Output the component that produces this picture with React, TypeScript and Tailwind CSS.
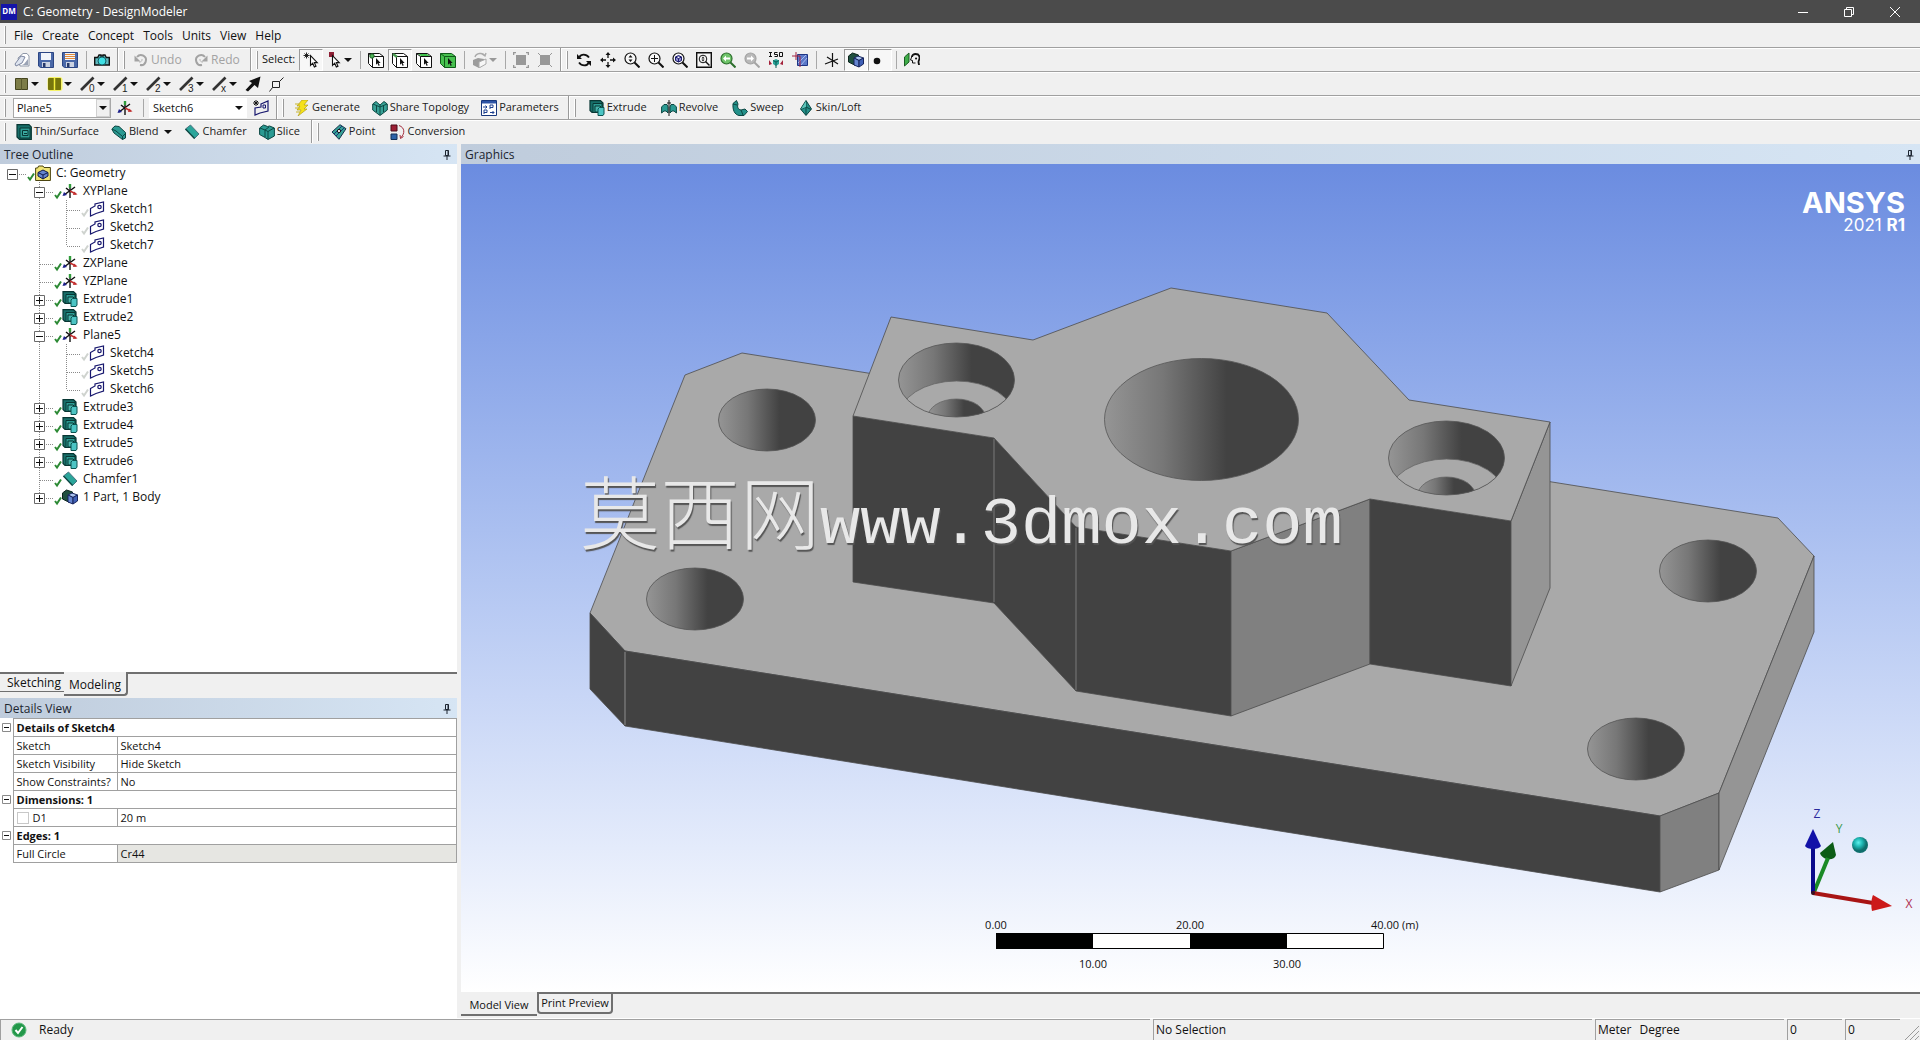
import { useState } from 'react'
import type { ReactNode } from 'react'
import { clsx } from 'clsx'

interface TreeItem {
  id: string
  label: string
  level: number
  icon: ReactNode
  parent?: string
  expandable?: boolean
  hidden?: boolean
}

interface DetailRow {
  label: string
  value?: string
  header?: boolean
  checkbox?: boolean
  readOnly?: boolean
}

function Icon({ children }: { children: ReactNode }) {
  return (
    <svg viewBox="0 0 16 16" className="h-4 w-4 shrink-0" fill="none">
      {children}
    </svg>
  )
}

const CURSOR = 'M0 0v9l2-2 1.5 3.5 1.5-.7L3.500 6.500H6.200z'

const NewIcon = () => (
  <Icon>
    <path d="M4 6 9 1.500h4L15 4v10H6z" fill="#fff" stroke="#8f98a8" />
    <path d="M1 12 7 4l4 1-3 6-6 3z" fill="#dfe5f0" stroke="#7c86a0" />
    <path d="M10 12 14 7v6H8z" fill="#9aa3b5" />
  </Icon>
)

const SaveIcon = ({ lines }: { lines?: boolean }) => (
  <Icon>
    <path d="M.5.5h15v15H2.500L.5 14z" fill="#4a68a8" stroke="#2c4684" />
    <path d="M3 1h10v7H3z" fill="#f2f5fa" />
    {lines && <path d="M3 2.500h10M3 4.500h10M3 6.500h10" stroke="#e08a3a" />}
    <path d="M4 10h8v5H4z" fill="#ccd3e2" />
    <path d="M5 11h2.500v4H5z" fill="#26386a" />
  </Icon>
)

const CameraIcon = () => (
  <Icon>
    <path d="M.7 5.500h3L5 3h2v1h2V3h2l1.300 2.500h3v7.500H.7z" fill="#5fb7bd" stroke="#111" strokeWidth="1.400" />
    <circle cx="8" cy="9" r="4" fill="#3fe0e4" stroke="#145c63" />
  </Icon>
)

const UndoIcon = ({ flip }: { flip?: boolean }) => (
  <Icon>
    <g transform={flip ? 'matrix(-1 0 0 1 16 0)' : undefined}>
      <path d="M4 5a5 5 0 1 1 3 8" stroke="#a3a3a3" strokeWidth="2" />
      <path d="M1.500 3.500v6h6z" fill="#a3a3a3" />
      <path d="M6 10a2.500 2.500 0 0 0 3-3" stroke="#b5b5b5" />
    </g>
  </Icon>
)

const NewSelectIcon = () => (
  <Icon>
    <path d="M3.500.500v6M.500 3.500h6M1.500 1.500l4 4M5.500 1.500l-4 4" stroke="#111" strokeWidth=".9" />
    <path transform="translate(7.500 3.500) scale(1.100)" d={CURSOR} fill="#fff" stroke="#111" />
  </Icon>
)

const SelectModeIcon = () => (
  <Icon>
    <path d="M2 0h5v5H2z" fill="#8e1f35" />
    <path transform="translate(5.500 3.500) scale(1.100)" d={CURSOR} fill="#fff" stroke="#111" />
  </Icon>
)

const FilterIcon = ({ kind }: { kind: 'point' | 'edge' | 'face' | 'body' }) => {
  const body = kind === 'body'
  return (
    <Icon>
      <path
        d="M.5 1.500h11l4 3v11h-11l-4-4z"
        fill={body ? '#46c04e' : '#fff'}
        stroke={body ? '#0f5a18' : '#111'}
      />
      {kind === 'face' && <path d="M2 2h9l3 2H5z" fill="#3fc04a" />}
      <path d="M4.500 4.500h11M4.500 4.500v11M.500 1.500l4 3" stroke={body ? '#0f5a18' : '#111'} />
      {kind === 'edge' && <path d="m1 2 4 3" stroke="#4a9a50" strokeWidth="2.400" />}
      {kind === 'point' && <circle cx="4" cy="4" r="2.200" fill="#4fb558" stroke="#1c5c24" />}
      <path transform="translate(8 6) scale(.75)" d={CURSOR} fill="#111" />
    </Icon>
  )
}

const ExtendIcon = () => (
  <Icon>
    <path d="m1 8 5-2 6 1v6l-5 3-6-3z" fill="#9c9c9c" />
    <path d="m7 10 7-3v5l-7 4z" fill="#f7f7f7" stroke="#aaa" />
    <path d="M3 5c1-4 8-5 10-1M10 2l3 2 1-3" stroke="#aaa" strokeWidth="1.400" />
  </Icon>
)

const GrowIcon = ({ inward }: { inward?: boolean }) => (
  <Icon>
    <path d="M3 3h10v10H3z" fill="#999" />
    {inward ?
      <path d="m1 1 4 4M15 1l-4 4M1 15l4-4M15 15l-4-4" stroke="#999" />
    : <path d="M.5 3V.5H3M13 .5h2.500V3M.5 13v2.500H3M15.500 13v2.500H13" stroke="#999" strokeWidth="1.600" />}
  </Icon>
)

const RotateIcon = () => (
  <Icon>
    <path d="M13 5.500C10 1.500 5 2 3.500 5M3 10.500c3 4 8 3.500 9.500.500" stroke="#111" strokeWidth="1.800" />
    <path d="M1 2v5h5zM15 14V9h-5z" fill="#111" />
  </Icon>
)

const PanIcon = () => (
  <Icon>
    <path d="M8 2v4M8 10v4M2 8h4M10 8h4" stroke="#111" strokeWidth="1.300" />
    <path d="m8 0 2.500 3h-5zM8 16l2.500-3h-5zM0 8l3-2.500v5zM16 8l-3-2.500v5z" fill="#111" />
  </Icon>
)

const Lens = ({ children, color = '#111', fill = '#f7f7f7' }: { children?: ReactNode; color?: string; fill?: string }) => (
  <Icon>
    <circle cx="6.500" cy="6.500" r="5.500" stroke={color} fill={fill} strokeWidth="1.200" />
    <path d="m10.500 10.500 5 5" stroke={color} strokeWidth="2" />
    {children}
  </Icon>
)

const FitIcon = () => (
  <Icon>
    <path d="M.7.7h14.600v14.600H.7z" stroke="#111" strokeWidth="1.400" fill="#f7f7f7" />
    <circle cx="7" cy="7" r="3.800" stroke="#111" />
    <path d="m9.500 9.500 4 4" stroke="#111" strokeWidth="1.500" />
    <path d="M7 4.500 8.500 6.500h-3zM7 9.500 8.500 7.500h-3z" fill="#111" />
  </Icon>
)

const IsoIcon = () => (
  <Icon>
    <path d="M1 .5h3M2.500.5v4M1 4.500h3M9.500.5h-3v2h3v2h-3M11.500.5h3v4h-3z" stroke="#111" />
    <path d="m8 7 3 1.500v3.500l-3 2-3-2V8.500z" fill="#2ba59a" />
    <path d="m5 8.500 3 1.500 3-1.500M8 10v6" stroke="#0c5c55" />
    <path d="M1 8v5l3-1zM15 8v5l-3-1z" fill="#a3213a" />
  </Icon>
)

const LookAtIcon = () => (
  <Icon>
    <path d="M5.500 2.500h10v11h-10z" fill="#5a78c8" stroke="#1d3484" />
    <path d="m6 11 8-8M9 13l6-7" stroke="#a7baf0" />
    <path d="M0 4h8M4 0v8M8 4v11" stroke="#a02040" />
  </Icon>
)

const AxesIcon = () => (
  <Icon>
    <path d="M8.500 1v14M1 12l13-5M3 5l11 7" stroke="#111" strokeWidth="1.200" />
  </Icon>
)

const PlaneIcon = () => (
  <Icon>
    <path d="M8 1v14" stroke="#111" strokeWidth="1.400" />
    <path d="M8 1v4" stroke="#2f9b3a" strokeWidth="2.400" />
    <path d="M2 12 13 4M4 5l5 4" stroke="#111" strokeWidth="1.500" />
    <path d="m8 8 6 3" stroke="#c22f2f" strokeWidth="1.500" />
    <path d="m12 8.500 3.500 3-4.500.500z" fill="#c22f2f" />
    <path d="M.5 13 2 9l3 3z" fill="#1b1f8c" />
  </Icon>
)

const BodyIcon = () => (
  <Icon>
    <path d="m.5 4 4-3 6 2v7l-4 3-6-3z" fill="#1f4f3f" stroke="#0c241c" />
    <path d="m6 6 4-2 5.500 2-4.500 2.500z" fill="#a9c2ee" stroke="#17245c" />
    <path d="m6 6 5 2.500v6.500L6 13z" fill="#6484cf" stroke="#17245c" />
    <path d="M11 8.500 15.500 6v6L11 15z" fill="#3f5fb5" stroke="#17245c" />
  </Icon>
)

const DotIcon = () => (
  <Icon>
    <circle cx="5" cy="9" r="3.300" fill="#111" />
  </Icon>
)

const FaceIcon = () => (
  <Icon>
    <path d="M.5 5 5 1v9L.5 14z" fill="#3fae49" stroke="#1a5c22" />
    <path d="M8 5c0-4 7-4 7.500 0 .3 3-1 3-1 5 0 1 .500 2 .500 3" stroke="#111" strokeWidth="1.800" />
    <path d="M8 4 6.500 8l2 .500v2.500h3" stroke="#111" />
    <path d="M12 6.500h.100" stroke="#111" strokeWidth="2" strokeLinecap="round" />
  </Icon>
)

const ColorBoxIcon = ({ glow }: { glow?: boolean }) => (
  <Icon>
    {glow && <rect x=".5" y="1" width="15" height="14" rx="3" fill="#f6f36a" />}
    <path d="M1.500 2.500h12v11h-12z" fill={glow ? '#77760c' : '#7d7d48'} stroke={glow ? '#77760c' : '#45451f'} />
    <path d="M7.500 2v12" stroke={glow ? '#f3ef3c' : '#59592c'} strokeWidth={glow ? 1.5 : 1} />
  </Icon>
)

const JointIcon = ({ mark }: { mark: string }) => (
  <Icon>
    <path d="M1 14 13.500 1.500" stroke="#333" strokeWidth="2.600" />
    <text x="9" y="15.500" fontSize="10" fill="#222" fontFamily="Liberation Sans">
      {mark}
    </text>
  </Icon>
)

const ArrowIcon = () => (
  <Icon>
    <path d="M15.500.5 13 12l-3.500-3L3 15.500.5 14 7 7 4 5z" fill="#111" />
  </Icon>
)

const PinPointIcon = () => (
  <Icon>
    <path d="M3.500 5.500h7v6h-7zM10.500 5.500l4-4M3.500 11.500l-3 4" stroke="#222" />
  </Icon>
)

const SketchIcon = () => (
  <Icon>
    <path d="M1.500 7.500 6 5V3l8.500-2v9L7 12.500 1.500 15z" fill="#fff" stroke="#17176e" strokeWidth="1.200" />
    <circle cx="10.500" cy="6" r="1.700" stroke="#17176e" strokeWidth="1.200" />
  </Icon>
)

const NewSketchIcon = () => (
  <Icon>
    <path d="M3 0v6M0 3h6M1 1l4 4M5 1 1 5" stroke="#111" />
    <path d="M8 4 15 1v10l-8 2-5 2V8l6-1z" stroke="#17176e" strokeWidth="1.200" />
    <path d="M10 5h2.500v3H10z" stroke="#17176e" />
  </Icon>
)

const GenerateIcon = () => (
  <Icon>
    <path d="M8 0h6l-4 5h4l-4 4h3L4 16l3-6H3l3-4H3z" fill="#f5e11a" stroke="#a8940c" strokeWidth=".6" />
    <path d="M1 4h5M1 8h5M2 12h4" stroke="#c9b62c" />
  </Icon>
)

const ShareIcon = () => (
  <Icon>
    <path d="M.7 4 4 1.500 8 5l4-3.500L15.300 4v6L8 15.500.7 10z" fill="#37a196" stroke="#0e4a45" />
    <path d="M8 5v10M4.500 6v6M11.500 6v6M1 4l7 3 7-3" stroke="#0e4a45" />
  </Icon>
)

const ParametersIcon = () => (
  <Icon>
    <path d="M.5.5h15v15H.5z" fill="#fff" stroke="#17377c" />
    <path d="M1 1h14v2.500H1z" fill="#2e55a6" />
    <path d="M2 7h4M4.500 5.500 6 7 4.500 8.500M9 9V5h3v2.500H9M3 14v-4h3v2.500H3M9 12.500h4M11.500 11l1.500 1.500-1.500 1.500" stroke="#1b3f8f" />
  </Icon>
)

const ExtrudeIcon = () => (
  <Icon>
    <path d="M1 .7h10.500L14 3v8.500l-1 1H3L1 10.500z" fill="#176e69" stroke="#083633" strokeWidth="1.200" />
    <path d="M4 3.500h9v9H4z" fill="#2b9a92" stroke="#083633" />
    <path d="M6 6h5l2 2v4H6z" fill="#45b3aa" stroke="#083633" />
    <path d="m9 9 1.500-1.500H15V14l-1 1.500H9z" fill="#4cc4c4" stroke="#0b5350" />
  </Icon>
)

const ThinIcon = () => (
  <Icon>
    <path d="M1 .7h12L15.300 3v12.300H3.500L1 13z" fill="#176e69" stroke="#083633" strokeWidth="1.200" />
    <path d="M4 4h10v10H4z" fill="#2f9c94" stroke="#083633" />
    <path d="M6.500 6.500h5.500v5H6.500z" fill="#3aa89f" stroke="#083633" />
    <path d="M8 9.500h3" stroke="#083633" />
  </Icon>
)

const RevolveIcon = () => (
  <Icon>
    <path d="M.6 7 3 4.500h3L7 7v6L5 11H3L.6 13zM15.400 7 13 4.500h-3L9 7v6l2-2h2l2.400 2z" fill="#2b9a92" stroke="#0b4642" />
    <path d="M8 0v16M6 3h4" stroke="#111" />
  </Icon>
)

const SweepIcon = () => (
  <Icon>
    <path d="M1 3.500 4.500.5 6 4c-1 3 0 5.500 3 6l4-1 2.500 2.500-3.500 4H7C2.500 14.500.5 10 1 3.500z" fill="#239089" stroke="#0b4642" />
    <path d="m1 4 4 1M9 10l2 5" stroke="#0b4642" />
  </Icon>
)

const LoftIcon = () => (
  <Icon>
    <path d="M8 .5 13.500 9 8 15.500 2.500 9z" fill="#239089" stroke="#0b4642" />
    <path d="M8 1v14M3 9.500 8 7l5 2.500" stroke="#0b4642" />
    <path d="M8 1v6L3 9z" fill="#5cc4ba" />
  </Icon>
)

const BlendIcon = () => (
  <Icon>
    <path d="M.8 5 4 2l4 .5 6.500 6V14l-3 1.500L3 9z" fill="#2b9a92" stroke="#0b4642" />
    <path d="m1 5 4 2 6.500 5.500v3M11.500 12.500l3-3" stroke="#0b4642" />
  </Icon>
)

const ChamferIcon = () => (
  <Icon>
    <path d="m1.500 5 5-4 8.500 9-4.500 4.500z" fill="#2ba59a" stroke="#4a7480" />
    <path d="m1.500 5 9 9.500" stroke="#0e4a45" strokeWidth="1.400" />
  </Icon>
)

const SliceIcon = () => (
  <Icon>
    <path d="m.6 4 4-3 4 1.500 2-.5L15.400 4v8L9 15.500l-3-2-5.400-3z" fill="#2b9a92" stroke="#0b4642" />
    <path d="m1 4 5 2v7M6 6l4-3M9 7.500l6-3.500M9 7.500v7.500M9 7.500 6 6" stroke="#0b4642" />
  </Icon>
)

const PointIcon = () => (
  <Icon>
    <path d="M1 8 9 .7l6 4L8 15.300z" fill="#37a196" stroke="#15324c" />
    <path d="m3 10 8-8M5 12l8-8" stroke="#17377c" />
    <circle cx="8" cy="7" r="1.600" fill="#fff" stroke="#111" />
  </Icon>
)

const ConversionIcon = () => (
  <Icon>
    <path d="M1 1h6v6H1z" fill="#9c1f34" stroke="#4a0c18" />
    <path d="M1 10h6v5.500H1z" fill="#2c62a8" stroke="#122f55" />
    <path d="M9 1.500c6 2 6 8 2 12M13.500 12.500l-3 2-.5-3.500" stroke="#a32c3c" />
  </Icon>
)

const GeometryIcon = () => (
  <Icon>
    <path d="M.6 3h2l1-2H8l1 1.500h6.400v13H.6z" fill="#f0e474" stroke="#4b4510" />
    <path d="M3 7.500 8 5l5 2.500v3.500l-5 3-5-3z" fill="#6484cf" stroke="#111b4c" />
    <path d="m3 7.500 5 2.500 5-2.500M8 10v4" stroke="#111b4c" />
  </Icon>
)

const Caret = ({ muted }: { muted?: boolean }) => (
  <svg viewBox="0 0 8 4" className="h-1 w-2 shrink-0">
    <path d="M0 0h8L4 4z" fill={muted ? '#999' : '#111'} />
  </svg>
)

const PushPin = () => (
  <svg viewBox="0 0 8 10" className="h-[10px] w-2" fill="none" stroke="#1c2530">
    <path d="M2.500.500h3v5h-3zM5 .5v5M.500 6h7M4 6v4" />
  </svg>
)

const Grip = () => <div className="mr-1 ml-1 h-[18px] w-[2px] shrink-0 border-r border-l border-r-[#9a9a9a] border-l-white" />

const Separator = () => (
  <div className="flex w-2 shrink-0 justify-center">
    <div className="h-[18px] w-px bg-[#a8a8a8]" />
  </div>
)

const GroupEnd = () => (
  <div className="flex h-full shrink-0 items-center pl-[3px]">
    <div className="h-full w-[2px] border-r border-l border-r-white border-l-[#9a9a9a]" />
    <Grip />
  </div>
)

function ToolButton({ title, pressed, children }: { title: string; pressed?: boolean; children: ReactNode }) {
  return (
    <button
      title={title}
      aria-label={title}
      aria-pressed={pressed}
      className={clsx(
        'flex h-[22px] w-6 shrink-0 items-center justify-center border',
        pressed ? 'border-t-[#9a9a9a] border-r-white border-b-white border-l-[#9a9a9a] bg-[#f7f7f7]' : 'border-transparent',
      )}
    >
      {children}
    </button>
  )
}

function DropButton({ title, muted, children }: { title: string; muted?: boolean; children: ReactNode }) {
  return (
    <button title={title} aria-label={title} className="flex h-[22px] w-[33px] shrink-0 items-center gap-px pl-1">
      {children}
      <Caret muted={muted} />
    </button>
  )
}

function TextButton({ icon, label, caret }: { icon: ReactNode; label: string; caret?: boolean }) {
  return (
    <button className="flex h-[22px] shrink-0 items-center gap-[2px] px-[6px] whitespace-nowrap text-[#222]">
      {icon}
      {label}
      {caret && (
        <span className="pl-1">
          <Caret />
        </span>
      )}
    </button>
  )
}

function Combo({ label, options, framed }: { label: string; options: string[]; framed?: boolean }) {
  return (
    <div className="relative flex shrink-0 items-center">
      <select
        aria-label={label}
        className={clsx(
          'h-5 w-[98px] appearance-none border bg-white pl-[3px] leading-4 outline-none',
          framed ? 'border-[#a8a8a8]' : 'border-white',
        )}
      >
        {options.map((option) => (
          <option key={option}>{option}</option>
        ))}
      </select>
      <span
        className={clsx(
          'pointer-events-none absolute inset-y-px right-px flex w-[14px] items-center justify-center',
          framed && 'border border-[#d0d0d0] bg-[#f0f0f0]',
        )}
      >
        <Caret />
      </span>
    </div>
  )
}

function ToolRow({ children }: { children: ReactNode }) {
  return (
    <div className="flex h-6 items-center overflow-hidden border-t border-[#a0a0a0] shadow-[inset_0_1px_0_#fff]">
      <Grip />
      {children}
    </div>
  )
}

function PanelHeader({ title }: { title: string }) {
  return (
    <div className="flex h-5 shrink-0 items-center justify-between bg-linear-to-r from-[#bfccdc] to-[#d6e5f4] pt-px pr-[6px] pl-1 text-[#1c2530]">
      <h2>{title}</h2>
      <button aria-label={`Pin ${title}`}>
        <PushPin />
      </button>
    </div>
  )
}

const menus = ['File', 'Create', 'Concept', 'Tools', 'Units', 'View', 'Help']

const extrude = (n: number): TreeItem => ({
  id: `extrude${n}`,
  label: `Extrude${n}`,
  level: 1,
  icon: <ExtrudeIcon />,
  expandable: true,
})

const plane = (label: string, expandable?: boolean): TreeItem => ({
  id: label,
  label,
  level: 1,
  icon: <PlaneIcon />,
  expandable,
})

const sketch = (n: number, parent: string): TreeItem => ({
  id: `sketch${n}`,
  label: `Sketch${n}`,
  level: 2,
  icon: <SketchIcon />,
  parent,
  hidden: true,
})

const tree: TreeItem[] = [
  { id: 'root', label: 'C: Geometry', level: 0, icon: <GeometryIcon />, expandable: true },
  plane('XYPlane', true),
  sketch(1, 'XYPlane'),
  sketch(2, 'XYPlane'),
  sketch(7, 'XYPlane'),
  plane('ZXPlane'),
  plane('YZPlane'),
  extrude(1),
  extrude(2),
  plane('Plane5', true),
  sketch(4, 'Plane5'),
  sketch(5, 'Plane5'),
  sketch(6, 'Plane5'),
  extrude(3),
  extrude(4),
  extrude(5),
  extrude(6),
  { id: 'chamfer1', label: 'Chamfer1', level: 1, icon: <ChamferIcon /> },
  { id: 'body', label: '1 Part, 1 Body', level: 1, icon: <BodyIcon />, expandable: true },
]

const details: DetailRow[] = [
  { label: 'Details of Sketch4', header: true },
  { label: 'Sketch', value: 'Sketch4' },
  { label: 'Sketch Visibility', value: 'Hide Sketch' },
  { label: 'Show Constraints?', value: 'No' },
  { label: 'Dimensions: 1', header: true },
  { label: 'D1', value: '20 m', checkbox: true },
  { label: 'Edges: 1', header: true },
  { label: 'Full Circle', value: 'Cr44', readOnly: true },
]

function Guide() {
  return (
    <svg className="h-[18px] w-[27px]" stroke="#8a8a8a" strokeDasharray="1 1">
      <path d="M12.500 0v18" />
    </svg>
  )
}

function TreeOutline() {
  const [open, setOpen] = useState<string[]>(['root', 'XYPlane', 'Plane5'])

  const toggle = (id: string) =>
    setOpen((prev) => (prev.includes(id) ? prev.filter((x) => x !== id) : [...prev, id]))

  const rows = tree.filter(
    (item) => item.level === 0 || (open.includes('root') && (!item.parent || open.includes(item.parent))),
  )

  return (
    <ul className="min-h-0 flex-1 overflow-hidden bg-white">
      {rows.map((item, i) => {
        const next = rows[i + 1]
        const last = !next || next.level < item.level
        return (
          <li key={item.id} className="flex h-[18px] items-center">
            {item.level > 0 && <span className="w-[27px]" />}
            {item.level === 2 && <Guide />}
            <button
              aria-label={item.expandable ? `Toggle ${item.label}` : undefined}
              tabIndex={item.expandable ? 0 : -1}
              onClick={() => item.expandable && toggle(item.id)}
            >
              <svg viewBox="0 0 27 18" className="h-[18px] w-[27px]" fill="none">
                <path d="M13 10.500h14" stroke="#8a8a8a" strokeDasharray="1 1" />
                {item.level > 0 && (
                  <path d={last ? 'M12.500 0v10' : 'M12.500 0v18'} stroke="#8a8a8a" strokeDasharray="1 1" />
                )}
                {item.expandable && (
                  <>
                    <path d="M7.500 5.500h10v10h-10z" fill="#fff" stroke="#6a6a6a" />
                    <path d={open.includes(item.id) ? 'M9 10.500h7' : 'M9 10.500h7M12.500 7v7'} stroke="#111" />
                  </>
                )}
              </svg>
            </button>
            <svg viewBox="0 0 8 18" className="h-[18px] w-2 shrink-0" fill="none">
              <path d="m1 13 2 2.500 4-6" stroke={item.hidden ? '#cfd3cf' : '#2d8a35'} strokeWidth="2" />
            </svg>
            {item.icon}
            <span className="pl-[5px] whitespace-nowrap">{item.label}</span>
          </li>
        )
      })}
    </ul>
  )
}

function DetailsTable() {
  return (
    <table className="w-full table-fixed border-collapse text-[11px]">
      <colgroup>
        <col className="w-[13px]" />
        <col className="w-[104px]" />
        <col />
      </colgroup>
      <tbody>
        {details.map((row) => (
          <tr key={row.label} className="h-[18px] leading-4">
            <td className="p-0">
              {row.header && (
                <button aria-label={`Collapse ${row.label}`} className="block pl-[2px]">
                  <svg viewBox="0 0 9 9" className="h-[9px] w-[9px]" fill="#fff">
                    <path d="M.5.5h8v8h-8z" stroke="#8a8a8a" />
                    <path d="M2 4.500h5" stroke="#111" />
                  </svg>
                </button>
              )}
            </td>
            {row.header ?
              <th colSpan={2} scope="rowgroup" className="border border-[#a0a0a0] p-0 pl-[3px] text-left font-bold">
                {row.label}
              </th>
            : <>
                <th scope="row" className="border border-[#a0a0a0] p-0 pl-[3px] text-left font-normal whitespace-nowrap">
                  {row.checkbox ?
                    <label className="flex items-center gap-1">
                      <input type="checkbox" className="h-3 w-3 appearance-none border border-[#c8c8c8] bg-white" />
                      {row.label}
                    </label>
                  : row.label}
                </th>
                <td className={clsx('border border-[#a0a0a0] p-0 pl-[3px]', row.readOnly && 'bg-[#e6e6e2]')}>{row.value}</td>
              </>
            }
          </tr>
        ))}
      </tbody>
    </table>
  )
}

function Hole({ cx, cy, rx, ry }: { cx: number; cy: number; rx: number; ry: number }) {
  return <ellipse cx={cx} cy={cy} rx={rx} ry={ry} fill="url(#bore)" stroke="#555" strokeWidth=".8" />
}

function Counterbore({ id, cx, cy }: { id: string; cx: number; cy: number }) {
  return (
    <>
      <clipPath id={id}>
        <ellipse cx={cx} cy={cy} rx="58" ry="37" />
      </clipPath>
      <ellipse cx={cx} cy={cy} rx="58" ry="37" fill="url(#bore)" />
      <g clipPath={`url(#${id})`}>
        <ellipse cx={cx} cy={cy + 38} rx="58" ry="37" fill="#a9a9a9" stroke="#666" strokeWidth=".8" />
        <ellipse cx={cx} cy={cy + 38} rx="29" ry="19" fill="url(#bore)" stroke="#666" strokeWidth=".8" />
      </g>
      <ellipse cx={cx} cy={cy} rx="58" ry="37" stroke="#555" strokeWidth=".8" />
    </>
  )
}

function Scene() {
  return (
    <svg viewBox="461 164 1459 828" preserveAspectRatio="xMidYMid meet" className="absolute inset-0 h-full w-full" fill="none">
      <defs>
        <linearGradient id="bore">
          <stop offset="0" stopColor="#959595" />
          <stop offset=".3" stopColor="#777" />
          <stop offset=".63" stopColor="#424242" />
          <stop offset="1" stopColor="#424242" />
        </linearGradient>
        <radialGradient id="ball" cx=".4" cy=".35">
          <stop offset="0" stopColor="#5ff0ec" />
          <stop offset=".5" stopColor="#1fb8b4" />
          <stop offset="1" stopColor="#0e6e6c" />
        </radialGradient>
      </defs>

      {/* base plate */}
      <g stroke="#4c4c4c" strokeWidth=".8" strokeLinejoin="round">
        <path d="M742 353 685 375 590 613 625 651 1660 816 1719 793 1814 556 1778 518z" fill="#a9a9a9" />
        <path d="M590 613 625 651V726L590 689z" fill="#424242" />
        <path d="M625 651 1660 816V892L625 726z" fill="#424242" />
        <path d="m1660 816 59-23v77l-59 22z" fill="#808080" />
        <path d="m1719 793 95-237v76l-95 238z" fill="#959595" />
      </g>
      <path d="M625 652v73" stroke="#8a8a8a" />
      <Hole cx={767} cy={420} rx={48.5} ry={31} />
      <Hole cx={695} cy={599} rx={48.5} ry={31} />
      <Hole cx={1708} cy={571} rx={48.5} ry={31} />
      <Hole cx={1636} cy={749} rx={48.5} ry={31} />

      {/* boss */}
      <g stroke="#4c4c4c" strokeWidth=".8" strokeLinejoin="round">
        <path d="m853 416 141 22v165l-141-21z" fill="#424242" />
        <path d="m994 438 82 89v164l-82-88z" fill="#424242" />
        <path d="m1076 527 155 24v165l-155-25z" fill="#424242" />
        <path d="m1231 551 139-52v165l-139 52z" fill="#808080" />
        <path d="m1370 499 141 22v165l-141-22z" fill="#424242" />
        <path d="m1511 521 39-99v166l-39 98z" fill="#959595" />
        <path
          d="M891 317 1033 340 1171 288 1327 313 1409 400 1550 422 1511 521 1370 499 1231 551 1076 527 994 438 853 416z"
          fill="#a9a9a9"
        />
      </g>
      <path d="M994 439v163M1076 528v162" stroke="#777" />
      <Hole cx={1201.5} cy={419.5} rx={97} ry={61} />
      <Counterbore id="bore-left" cx={956.5} cy={380} />
      <Counterbore id="bore-right" cx={1446.5} cy={458} />

      {/* scale ruler */}
      <path d="M996.5 933.500h387v15h-387z" fill="#fff" stroke="#000" />
      <path d="M996 933h97v16h-97zM1190 933h97v16h-97z" fill="#000" />
      <g fill="#111" fontSize="11" textAnchor="middle">
        <text x="996" y="929">0.00</text>
        <text x="1190" y="929">20.00</text>
        <text x="1371" y="929" textAnchor="start">40.00 (m)</text>
        <text x="1093" y="968">10.00</text>
        <text x="1287" y="968">30.00</text>
      </g>

      {/* triad */}
      <path d="m1833 842 3 13c-2 7-14 5-16-2z" fill="#0c5c16" />
      <path d="m1814 892 14-34" stroke="#1a8a26" strokeWidth="4" />
      <path d="M1813 893v-46" stroke="#0a0a8c" strokeWidth="4" />
      <path d="m1813 829 8 17c-2 4-14 4-16 0z" fill="#1212a8" />
      <path d="m1813 893 60 10" stroke="#a81414" strokeWidth="4" />
      <path d="m1892 906-19-11c-2 4-2 12-1 16z" fill="#cc1a1a" />
      <circle cx="1813" cy="893" r="2" fill="#3a1020" />
      <circle cx="1860" cy="845" r="8" fill="url(#ball)" />
      <g fontSize="12" textAnchor="middle">
        <text x="1817" y="818" fill="#2a2a9c">Z</text>
        <text x="1839" y="833" fill="#3c9a4c">Y</text>
        <text x="1909" y="908" fill="#b03050">X</text>
      </g>
    </svg>
  )
}

function StatusCell({ className, children }: { className?: string; children?: ReactNode }) {
  return (
    <div className={clsx('mr-[3px] flex h-full items-center border-t border-l border-[#a0a0a0] pl-[2px]', className)}>
      {children}
    </div>
  )
}

export default function App() {
  const [mode, setMode] = useState('Modeling')
  const [view, setView] = useState('Model View')

  return (
    <div className="flex h-screen flex-col overflow-hidden bg-[#f0f0f0] font-['Open_Sans',sans-serif] text-xs text-[#111]">
      <header className="flex h-[23px] shrink-0 items-center bg-[#4b4b4b] text-white">
        <span className="mr-[6px] ml-px flex h-4 w-4 items-center justify-center bg-[#1515a8] text-[8px] font-bold">DM</span>
        <h1 className="flex-1">C: Geometry - DesignModeler</h1>
        <div className="flex pr-[2px]">
          <button aria-label="Minimize" className="flex h-5 w-[46px] items-center justify-center">
            <svg className="h-3 w-3" stroke="#fff"><path d="M1 6.500h10" /></svg>
          </button>
          <button aria-label="Restore" className="flex h-5 w-[46px] items-center justify-center">
            <svg className="h-3 w-3" stroke="#fff" fill="none"><path d="M1.500 3.500h7v7h-7zM3.500 3V1.500h7v7H9" /></svg>
          </button>
          <button aria-label="Close" className="flex h-5 w-[46px] items-center justify-center">
            <svg className="h-3 w-3" stroke="#fff"><path d="m1 1 10 10M11 1 1 11" /></svg>
          </button>
        </div>
      </header>

      <nav className="flex h-6 shrink-0 items-center">
        <Grip />
        {menus.map((menu) => (
          <button key={menu} className="mr-[3px] pt-px pr-[2px] pl-1">
            {menu}
          </button>
        ))}
      </nav>

      <div className="shrink-0 text-[11px]">
        <ToolRow>
          <ToolButton title="New"><NewIcon /></ToolButton>
          <ToolButton title="Save"><SaveIcon /></ToolButton>
          <ToolButton title="Export"><SaveIcon lines /></ToolButton>
          <Separator />
          <ToolButton title="Capture"><CameraIcon /></ToolButton>
          <GroupEnd />
          <button disabled className="flex w-[60px] shrink-0 items-center gap-[2px] pl-1 text-xs text-[#a3a3a3]">
            <UndoIcon />
            Undo
          </button>
          <button disabled className="flex w-[58px] shrink-0 items-center gap-[2px] pl-1 text-xs text-[#a3a3a3]">
            <UndoIcon flip />
            Redo
          </button>
          <GroupEnd />
          <span className="w-[37px] shrink-0">Select:</span>
          <ToolButton title="New Selection" pressed><NewSelectIcon /></ToolButton>
          <DropButton title="Select Mode"><SelectModeIcon /></DropButton>
          <Separator />
          <ToolButton title="Points"><FilterIcon kind="point" /></ToolButton>
          <ToolButton title="Edges" pressed><FilterIcon kind="edge" /></ToolButton>
          <ToolButton title="Faces"><FilterIcon kind="face" /></ToolButton>
          <ToolButton title="Bodies"><FilterIcon kind="body" /></ToolButton>
          <Separator />
          <DropButton title="Extend Selection" muted><ExtendIcon /></DropButton>
          <Separator />
          <ToolButton title="Expand"><GrowIcon /></ToolButton>
          <ToolButton title="Shrink"><GrowIcon inward /></ToolButton>
          <GroupEnd />
          <ToolButton title="Rotate"><RotateIcon /></ToolButton>
          <ToolButton title="Pan"><PanIcon /></ToolButton>
          <ToolButton title="Zoom">
            <Lens><path d="m6.500 3 2 2.500h-4zM6.500 10l2-2.500h-4z" fill="#111" /></Lens>
          </ToolButton>
          <ToolButton title="Box Zoom">
            <Lens><path d="M6.500 3v7M3 6.500h7" stroke="#111" /></Lens>
          </ToolButton>
          <ToolButton title="Zoom to Fit">
            <Lens><path d="m3.500 5 3-1.500 3 1.500v3.500l-3 1.500-3-1.500zM3.500 5l3 1.500 3-1.500M6.500 6.500V10" fill="#8e8ed0" stroke="#1b1b6e" /></Lens>
          </ToolButton>
          <ToolButton title="Magnifier"><FitIcon /></ToolButton>
          <ToolButton title="Previous View">
            <Lens color="#2c6e2c" fill="#6fc46a"><path d="m3 6.500 3-3v2h4v2H6v2z" fill="#fff" /></Lens>
          </ToolButton>
          <ToolButton title="Next View">
            <Lens color="#a3a3a3" fill="#b8b8b8"><path d="m10 6.500-3-3v2H3v2h4v2z" fill="#fff" /></Lens>
          </ToolButton>
          <ToolButton title="Isometric View"><IsoIcon /></ToolButton>
          <ToolButton title="Look At"><LookAtIcon /></ToolButton>
          <Separator />
          <ToolButton title="Display Plane"><AxesIcon /></ToolButton>
          <ToolButton title="Display Model" pressed><BodyIcon /></ToolButton>
          <ToolButton title="Display Points" pressed><DotIcon /></ToolButton>
          <Separator />
          <ToolButton title="Look at Face"><FaceIcon /></ToolButton>
        </ToolRow>

        <ToolRow>
          <DropButton title="Face Color"><ColorBoxIcon /></DropButton>
          <DropButton title="Edge Color"><ColorBoxIcon glow /></DropButton>
          {['0', '1', '2', '3', 'x'].map((mark) => (
            <DropButton key={mark} title={`Edge Joints ${mark}`}><JointIcon mark={mark} /></DropButton>
          ))}
          <ToolButton title="Edge Direction"><ArrowIcon /></ToolButton>
          <ToolButton title="Vertices"><PinPointIcon /></ToolButton>
        </ToolRow>

        <ToolRow>
          <div className="flex shrink-0 items-center gap-[2px] pl-[3px]">
            <Combo label="Active plane" options={['Plane5', 'XYPlane', 'ZXPlane', 'YZPlane']} framed />
            <ToolButton title="New Plane"><PlaneIcon /></ToolButton>
            <Separator />
            <Combo label="Active sketch" options={['Sketch6', 'Sketch5', 'Sketch4']} />
            <ToolButton title="New Sketch"><NewSketchIcon /></ToolButton>
          </div>
          <GroupEnd />
          <TextButton icon={<GenerateIcon />} label="Generate" />
          <TextButton icon={<ShareIcon />} label="Share Topology" />
          <TextButton icon={<ParametersIcon />} label="Parameters" />
          <GroupEnd />
          <div className="flex gap-[2px] pl-[3px]">
            <TextButton icon={<ExtrudeIcon />} label="Extrude" />
            <TextButton icon={<RevolveIcon />} label="Revolve" />
            <TextButton icon={<SweepIcon />} label="Sweep" />
            <TextButton icon={<LoftIcon />} label="Skin/Loft" />
          </div>
        </ToolRow>

        <ToolRow>
          <TextButton icon={<ThinIcon />} label="Thin/Surface" />
          <TextButton icon={<BlendIcon />} label="Blend" caret />
          <TextButton icon={<ChamferIcon />} label="Chamfer" />
          <TextButton icon={<SliceIcon />} label="Slice" />
          <div className="flex h-full items-center gap-[2px] pl-[2px]">
            <GroupEnd />
            <TextButton icon={<PointIcon />} label="Point" />
            <TextButton icon={<ConversionIcon />} label="Conversion" />
          </div>
        </ToolRow>
      </div>

      <main className="flex min-h-0 flex-1 gap-1 pt-px">
        <aside className="flex w-[457px] shrink-0 flex-col">
          <section className="flex min-h-0 flex-1 flex-col">
            <PanelHeader title="Tree Outline" />
            <TreeOutline />
            <div role="tablist" className="flex h-[26px] shrink-0 items-start">
              {['Sketching', 'Modeling'].map((tab) => (
                <button
                  key={tab}
                  role="tab"
                  aria-selected={mode === tab}
                  onClick={() => setMode(tab)}
                  className={clsx(
                    'w-16 border-[#707070]',
                    mode === tab ? 'h-6 rounded-br-sm border-r-2 border-b-2 pt-1' : 'h-5 border-t-2 border-b pt-px pl-1',
                  )}
                >
                  {tab}
                </button>
              ))}
              <div className="flex-1 border-t-2 border-[#707070]" />
            </div>
          </section>
          <section className="flex h-[320px] shrink-0 flex-col bg-white">
            <PanelHeader title="Details View" />
            <DetailsTable />
          </section>
        </aside>

        <section className="flex min-w-0 flex-1 flex-col">
          <PanelHeader title="Graphics" />
          <div className="relative min-h-0 flex-1 overflow-hidden bg-linear-to-b from-[#6b8ce0] to-white">
            <Scene />
            <div className="absolute top-6 right-[15px] text-right font-['Inter',sans-serif] leading-none text-white">
              <p className="text-[29px] font-bold">ANSYS</p>
              <p className="text-[17px]">
                2021 <b>R1</b>
              </p>
            </div>
            <p className="absolute top-[304px] left-[119px] flex items-baseline leading-none whitespace-nowrap text-[#e8e8e8] [text-shadow:1px_2px_1px_#555]">
              <span className="font-['Noto_Sans_CJK_SC',sans-serif] text-[80px] font-light">莫西网</span>
              <span className="font-['Liberation_Mono',monospace] text-[67px]">www.3dmox.com</span>
            </p>
          </div>
          <div role="tablist" className="flex h-[26px] shrink-0 items-start">
            {['Model View', 'Print Preview'].map((tab) => (
              <button
                key={tab}
                role="tab"
                aria-selected={view === tab}
                onClick={() => setView(tab)}
                className={clsx(
                  'w-[76px] border-[#707070] text-[11px] whitespace-nowrap',
                  view === tab ? 'h-6 border-b-2 pt-1' : 'h-[22px] rounded-b-sm border-2',
                )}
              >
                {tab}
              </button>
            ))}
            <div className="flex-1 border-t-2 border-[#707070]" />
          </div>
        </section>
      </main>

      <footer className="flex h-[22px] shrink-0 items-center border-t border-white">
        <StatusCell className="flex-1 gap-3">
          <svg viewBox="0 0 16 16" className="ml-2 h-4 w-4" fill="none">
            <circle cx="8" cy="8" r="7" fill="#23984a" stroke="#5cb87a" />
            <path d="m4.500 8 2.500 3 4.500-6" stroke="#fff" strokeWidth="2" />
          </svg>
          Ready
        </StatusCell>
        <StatusCell className="w-[439px]">No Selection</StatusCell>
        <StatusCell className="w-[189px] gap-2">
          <span>Meter</span>
          <span>Degree</span>
        </StatusCell>
        <StatusCell className="w-[55px]">0</StatusCell>
        <StatusCell className="w-[55px]">0</StatusCell>
        <svg viewBox="0 0 16 16" className="mr-px h-4 w-4 self-end" stroke="#9a9a9a">
          <path d="M2 16 16 2M7 16l9-9M12 16l4-4" />
        </svg>
      </footer>
    </div>
  )
}
